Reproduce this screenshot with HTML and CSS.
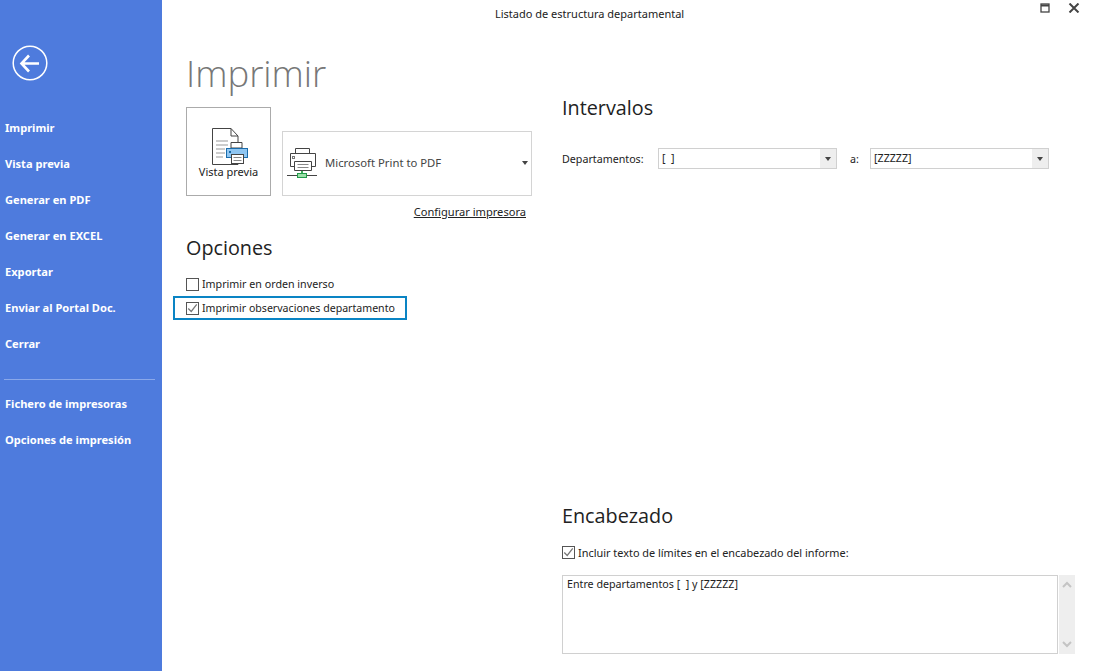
FILE: index.html
```html
<!DOCTYPE html>
<html lang="es">

<head>
    <meta charset="UTF-8">
    <title>Listado de estructura departamental</title>
    <link rel="stylesheet" href="styles.css">
</head>

<body>
    <div class="app">
        <!-- menu lateral -->
        <nav class="side">
            <a class="back" href="#">
                <svg width="36" height="36" viewBox="0 0 36 36">
                    <circle cx="18" cy="18" r="16.8" fill="none" stroke="#fff" stroke-width="1.5" />
                    <path d="M9 18.500H27M17 10.500L9.500 18.500L17 26.500" fill="none" stroke="#fff" stroke-width="2.600" />
                </svg>
            </a>
            <ul class="menu">
                <li>Imprimir</li>
                <li>Vista previa</li>
                <li>Generar en PDF</li>
                <li>Generar en EXCEL</li>
                <li>Exportar</li>
                <li>Enviar al Portal Doc.</li>
                <li>Cerrar</li>
            </ul>
            <div class="side-line"></div>
            <ul class="menu">
                <li>Fichero de impresoras</li>
                <li>Opciones de impresión</li>
            </ul>
        </nav>

        <main class="main">
            <header class="titlebar">
                <div class="title">Listado de estructura departamental</div>
                <div class="win-btns">
                    <svg width="11" height="10" viewBox="0 0 11 10">
                        <rect x="1" y="1" width="8" height="8" fill="none" stroke="#444" stroke-width="1.300" />
                        <path d="M1 2.500H9" stroke="#444" stroke-width="2" />
                    </svg>
                    <svg width="12" height="10" viewBox="0 0 12 10">
                        <path d="M1.500 0.500L10.500 9.500M10.500 0.500L1.500 9.500" stroke="#444" stroke-width="2" />
                    </svg>
                </div>
            </header>

            <div class="columns">
                <!-- izquierda -->
                <section class="col-left">
                    <h1 class="page-title">Imprimir</h1>
                    <div class="print-row">
                        <button class="preview-btn">
                            <svg class="preview-icon" width="38" height="40" viewBox="0 0 38 40">
                                <path d="M1.500 1.500H20L27 9V37.500H1.500Z" fill="#fff" stroke="#444" />
                                <path d="M20 1.500V9H27" fill="none" stroke="#444" />
                                <path d="M5 14H17M5 18H17M5 22H14M5 26H14M5 30H12" stroke="#999" />
                                <path d="M20 15.500H31V21H20Z" fill="#fff" stroke="#444" />
                                <rect x="15.500" y="21.500" width="21" height="9" fill="#8fc6f2" stroke="#1a6cab" />
                                <rect x="18" y="24" width="2" height="2" fill="#1a6cab" />
                                <rect x="20.500" y="27.500" width="12" height="9" fill="#fff" stroke="#444" />
                                <path d="M22.500 30.500H30.500M22.500 33.500H30.500" stroke="#888" />
                            </svg>
                            <span>Vista previa</span>
                        </button>
                        <div class="printer-box">
                            <svg width="32" height="32" viewBox="0 0 32 32">
                                <path d="M8.500 1.500H22.500V6.500H8.500Z" fill="#fff" stroke="#444" />
                                <path d="M3.500 6.500H28.500V19.500H3.500Z" fill="#fff" stroke="#444" />
                                <rect x="5.500" y="9.500" width="2" height="2" fill="none" stroke="#777" />
                                <path d="M7.500 14.500H24.500V23.500H7.500Z" fill="#fff" stroke="#444" />
                                <path d="M10.500 17.500H21.500M10.500 20.500H21.500" stroke="#888" />
                                <path d="M0 28.500H30" stroke="#444" />
                                <path d="M15 24V26" stroke="#3faa5a" stroke-width="2" />
                                <rect x="10.500" y="26.500" width="9" height="4" fill="#9be0a8" stroke="#22994a" />
                            </svg>
                            <span class="printer-name">Microsoft Print to PDF</span>
                            <span class="arrow"></span>
                        </div>
                    </div>
                    <div class="config-row"><a href="#" class="config">Configurar impresora</a></div>

                    <h2 class="heading heading-opc">Opciones</h2>
                    <label class="check-row">
                        <span class="check"></span>
                        Imprimir en orden inverso
                    </label>
                    <label class="check-row check-focus">
                        <span class="check">
                            <svg width="13" height="13" viewBox="0 0 13 13">
                                <path d="M1.500 6.500L5 10L11.500 1.500" fill="none" stroke="#777" stroke-width="1.500" />
                            </svg>
                        </span>
                        Imprimir observaciones departamento
                    </label>
                </section>

                <!-- derecha -->
                <section class="col-right">
                    <h2 class="heading heading-int">Intervalos</h2>
                    <div class="range-row">
                        <span class="range-label">Departamentos:</span>
                        <div class="combo">
                            <span class="combo-text">[ &nbsp;]</span>
                            <span class="combo-btn"><span class="arrow"></span></span>
                        </div>
                        <span class="range-a">a:</span>
                        <div class="combo">
                            <span class="combo-text">[ZZZZZ]</span>
                            <span class="combo-btn"><span class="arrow"></span></span>
                        </div>
                    </div>

                    <h2 class="heading heading-enc">Encabezado</h2>
                    <label class="check-row check-enc">
                        <span class="check">
                            <svg width="13" height="13" viewBox="0 0 13 13">
                                <path d="M1.500 6.500L5 10L11.500 1.500" fill="none" stroke="#777" stroke-width="1.500" />
                            </svg>
                        </span>
                        Incluir texto de límites en el encabezado del informe:
                    </label>
                    <div class="memo-wrap">
                        <div class="memo">Entre departamentos [ &nbsp;] y [ZZZZZ]</div>
                        <div class="memo-bar">
                            <svg width="10" height="7" viewBox="0 0 10 7">
                                <path d="M1 6L5 2L9 6" fill="none" stroke="#c4c4c4" stroke-width="2" />
                            </svg>
                            <svg width="10" height="7" viewBox="0 0 10 7">
                                <path d="M1 1L5 5L9 1" fill="none" stroke="#c4c4c4" stroke-width="2" />
                            </svg>
                        </div>
                    </div>
                </section>
            </div>
        </main>
    </div>
</body>

</html>
```

FILE: styles.css
```css
/* base */

* {
    box-sizing: border-box;
}

body {
    margin: 0;
    background: #fff;
    color: #222;
    font-family: "Noto Sans", "Liberation Sans", sans-serif;
    font-size: 10.700px;
    overflow: hidden;
}

.app {
    display: flex;
    height: 671px;
}

/******************** menu lateral ***********************/

.side {
    width: 162px;
    flex: none;
    padding-top: 45px;
    background: #4e7bdd;
    color: #fff;
}

.back {
    display: block;
    height: 36px;
    margin: 0 0 29px 12px;
}

.menu {
    margin: 0;
    padding: 0;
    list-style: none;
}

.menu li {
    height: 36px;
    padding-left: 5px;
    font-weight: 700;
    font-size: 11.100px;
    line-height: 36px;
}

.side-line {
    height: 1px;
    margin: 17px 7px 6px 4px;
    background: #8aa8ea;
}

/******************** contenido ***********************/

.main {
    flex: auto;
    min-width: 0;
}

.titlebar {
    display: flex;
    justify-content: space-between;
    height: 26px;
}

.title {
    flex: auto;
    padding: 6px 0 0 333px;
    font-size: 11px;
    line-height: 15px;
}

.win-btns {
    display: flex;
    gap: 17px;
    padding: 3px 13px 0 0;
}

.columns {
    display: grid;
    grid-template-columns: 346px 513px;
    column-gap: 30px;
    padding-left: 24px;
}

.page-title {
    margin: 0;
    padding-top: 22px;
    color: #777;
    font-family: "Open Sans", sans-serif;
    font-size: 36.500px;
    font-weight: 300;
    line-height: 50px;
}

.print-row {
    display: flex;
    align-items: flex-end;
    gap: 11px;
    margin-top: 9px;
}

.preview-btn {
    display: flex;
    flex-direction: column;
    align-items: center;
    width: 85px;
    height: 89px;
    padding: 19px 0 0;
    border: 1px solid #ababab;
    background: #fff;
    color: #222;
    font: inherit;
    font-size: 11px;
}

.preview-icon {
    margin-left: 2px;
}

.preview-btn span {
    margin-top: -3px;
}

.printer-box {
    display: flex;
    align-items: center;
    width: 250px;
    height: 65px;
    padding: 0 3px 2px 4px;
    border: 1px solid #d4d4d4;
    font-size: 11.300px;
    color: #444;
}

.printer-name {
    flex: auto;
    margin-left: 6px;
}

.arrow {
    display: block;
    width: 0;
    height: 0;
    border: 3px solid transparent;
    border-top: 4px solid #444;
    border-bottom: 0;
}

.config-row {
    padding: 7px 6px 0 0;
    text-align: right;
    font-size: 11.100px;
    line-height: 17px;
}

.config {
    color: #222;
}

.heading {
    margin: 0;
    color: #222;
    font-family: "Open Sans", sans-serif;
    font-size: 19.800px;
    font-weight: 400;
    line-height: 28px;
}

.heading-opc {
    margin-top: 14px;
}

.heading-int {
    margin-top: 68px;
}

.heading-enc {
    margin-top: 333px;
}

.check-row {
    display: flex;
    align-items: center;
    gap: 3px;
    height: 24px;
}

.check-row:first-of-type {
    margin-top: 10px;
}

.check {
    display: flex;
    align-items: center;
    justify-content: center;
    width: 13px;
    height: 13px;
    border: 1px solid #555;
    background: #fff;
}

.check-focus {
    width: 234px;
    height: 24px;
    margin-left: -13px;
    padding-left: 11px;
    border: 2px solid #0a84c4;
    font-size: 10.600px;
}

.check-enc {
    margin-top: 13px;
    font-size: 10.900px;
}

.range-row {
    display: flex;
    align-items: center;
    margin-top: 26px;
}

.range-label {
    width: 96px;
}

.range-a {
    width: 33px;
    padding-left: 13px;
}

.combo {
    display: flex;
    width: 179px;
    height: 21px;
    border: 1px solid #d0d0d0;
}

.combo-text {
    flex: auto;
    padding-left: 3px;
    line-height: 19px;
}

.combo-btn {
    display: flex;
    align-items: center;
    justify-content: center;
    width: 16px;
    background: #eee;
}

.memo-wrap {
    display: flex;
    margin-top: 11px;
}

.memo {
    width: 496px;
    height: 79px;
    padding: 1px 4px;
    border: 1px solid #d0d0d0;
    line-height: 15px;
}

.memo-bar {
    display: flex;
    flex-direction: column;
    justify-content: space-between;
    align-items: center;
    width: 16px;
    height: 79px;
    margin-left: 1px;
    padding: 6px 0;
    background: #eee;
}
```
